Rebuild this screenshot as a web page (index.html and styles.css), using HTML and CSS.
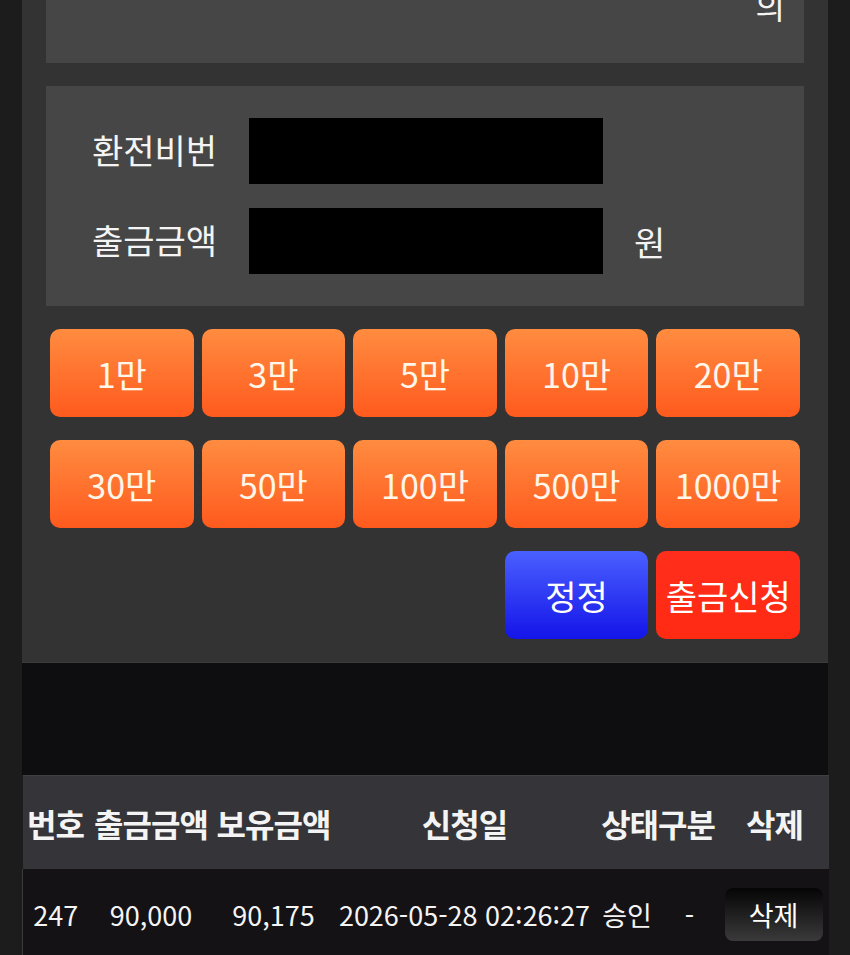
FILE: index.html
```html
<!DOCTYPE html>
<html lang="ko">
<head>
    <meta charset="UTF-8">
    <meta name="viewport" content="width=device-width, initial-scale=1.0">
    <title>출금신청</title>
    <link rel="stylesheet" href="styles.css">
</head>
<body>
    <div class="wrap">
        <div class="form-box">
            <div class="notice">
                <p>의</p>
            </div>

            <div class="pw-panel">
                <div class="field">
                    <span class="label">환전비번</span>
                    <input class="input" type="password">
                </div>
                <div class="field">
                    <span class="label">출금금액</span>
                    <input class="input" type="text">
                    <span class="unit">원</span>
                </div>
            </div>

            <div class="amounts">
                <button class="btn btn-orange">1만</button>
                <button class="btn btn-orange">3만</button>
                <button class="btn btn-orange">5만</button>
                <button class="btn btn-orange">10만</button>
                <button class="btn btn-orange">20만</button>
                <button class="btn btn-orange">30만</button>
                <button class="btn btn-orange">50만</button>
                <button class="btn btn-orange">100만</button>
                <button class="btn btn-orange">500만</button>
                <button class="btn btn-orange">1000만</button>
            </div>

            <div class="actions">
                <button class="btn btn-blue">정정</button>
                <button class="btn btn-red">출금신청</button>
            </div>
        </div>

        <div class="spacer"></div>

        <table class="history">
            <colgroup>
                <col style="width: 66px">
                <col style="width: 125px">
                <col style="width: 120px">
                <col style="width: 262px">
                <col style="width: 63px">
                <col style="width: 62px">
                <col style="width: 108px">
            </colgroup>
            <thead>
                <tr>
                    <th>번호</th>
                    <th>출금금액</th>
                    <th>보유금액</th>
                    <th>신청일</th>
                    <th colspan="2">상태구분</th>
                    <th>삭제</th>
                </tr>
            </thead>
            <tbody>
                <tr>
                    <td>247</td>
                    <td>90,000</td>
                    <td>90,175</td>
                    <td>2026-05-28 02:26:27</td>
                    <td>승인</td>
                    <td>-</td>
                    <td><button class="btn-del">삭제</button></td>
                </tr>
            </tbody>
        </table>
    </div>
</body>
</html>
```

FILE: styles.css
```css
body {
    margin: 0;
    background: #1c1c1c;
    font-family: "Noto Sans CJK KR", "Noto Sans", sans-serif;
    color: #f4f4f4;
}
.wrap {
    width: 806px;
    margin: 0 auto;
}
.form-box {
    background: #333333;
    padding: 0 24px 23px;
    border-bottom: 1px solid #3b3b3b;
}
.notice {
    height: 63px;
    background: #464646;
    overflow: hidden;
    text-align: right;
    padding-right: 19px;
}
.notice p {
    margin: -15px 0 0;
    font-size: 32px;
    line-height: 40px;
}
.pw-panel {
    margin-top: 23px;
    background: #464646;
    padding: 32px 0 32px 46px;
    display: flex;
    flex-direction: column;
    gap: 24px;
}
.field {
    display: flex;
    align-items: center;
}
.label {
    width: 157px;
    font-size: 34px;
    margin-top: -4px;
}
.input {
    width: 354px;
    height: 66px;
    background: #000;
    border: 0;
    padding: 0;
    margin: 0;
    color: #fff;
}
.unit {
    margin-left: 31px;
    font-size: 34px;
}
.amounts,
.actions {
    display: grid;
    grid-template-columns: repeat(5, 1fr);
    gap: 23px 8px;
    padding: 0 4px;
}
.amounts {
    margin-top: 23px;
}
.actions {
    margin-top: 23px;
}
.btn {
    height: 88px;
    border: 0;
    border-radius: 10px;
    font-family: inherit;
    font-size: 34px;
    color: #fff6ea;
    cursor: pointer;
}
.btn-orange {
    background: linear-gradient(#ff8c40, #ff5a1e);
}
.btn-blue {
    grid-column: 4;
    background: linear-gradient(#4a60ff, #1414e8);
    color: #fff;
}
.btn-red {
    grid-column: 5;
    background: linear-gradient(#ff2e1c, #ff2a12);
    color: #fff;
}
.spacer {
    height: 112px;
    background: #0e0d0f;
}
.history {
    width: 100%;
    border-collapse: collapse;
    table-layout: fixed;
}
.history th {
    height: 93px;
    background: #353438;
    border-top: 1px solid #3f3e42;
    font-size: 32px;
    font-weight: bold;
    letter-spacing: -1px;
    padding: 0;
    white-space: nowrap;
}
.history td {
    height: 96px;
    background: #141214;
    font-size: 27px;
    text-align: center;
    padding: 0;
    white-space: nowrap;
    vertical-align: top;
    padding-top: 26px;
}
.history tbody tr td:first-child {
    border-left: 1px solid #3a3a3a;
}
.btn-del {
    width: 98px;
    height: 53px;
    margin-top: -9px;
    margin-right: 2px;
    border: 0;
    border-radius: 8px;
    background: linear-gradient(#050505, #3a3a3a);
    color: #fff;
    font-family: inherit;
    font-size: 27px;
}
```
